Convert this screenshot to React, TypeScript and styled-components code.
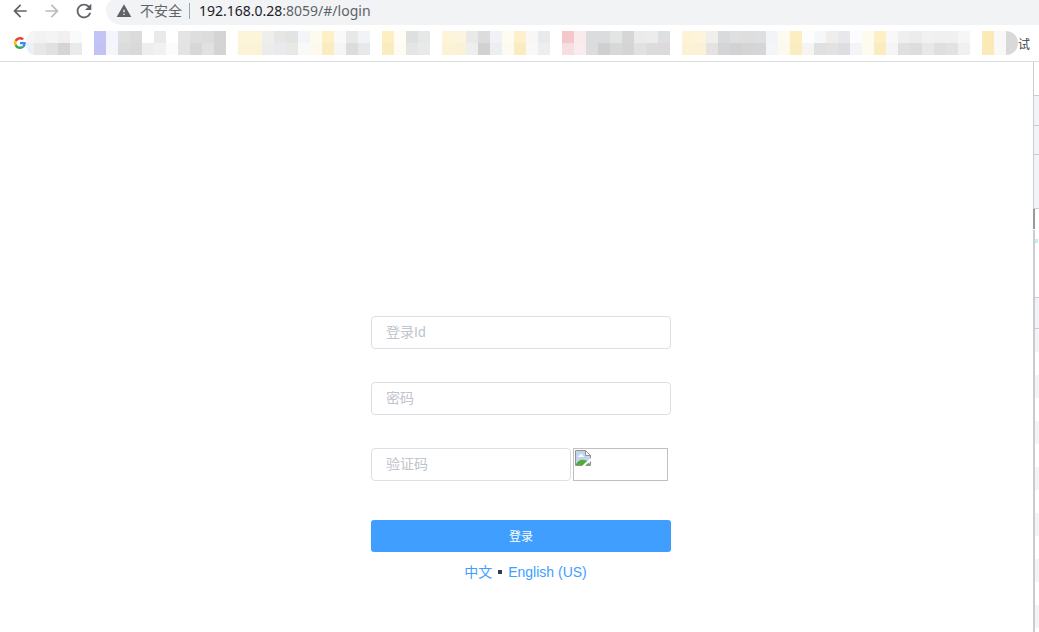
import React from 'react';
import styled, { createGlobalStyle } from 'styled-components';

const GlobalStyle = createGlobalStyle`
  * { box-sizing: border-box; }
  body {
    margin: 0;
    background: #fff;
    font-family: "Liberation Sans", "Noto Sans CJK SC", sans-serif;
    font-size: 14px;
  }
`;

const Page = styled.div`
  display: flex;
  flex-direction: column;
  height: 100vh;
  overflow: hidden;
`;

const Toolbar = styled.header`
  display: flex;
  height: 25px;
  padding-left: 4px;
`;

const IconButton = styled.button<{ $muted?: boolean }>`
  display: flex;
  align-items: center;
  justify-content: center;
  width: 32px;
  height: 22px;
  padding: 0;
  border: 0;
  background: none;
  color: ${(p) => (p.$muted ? '#babcbe' : '#5f6368')};
`;

const AddressBar = styled.div`
  display: flex;
  flex: 1;
  align-items: center;
  margin-left: 6px;
  padding: 0 0 3px 10px;
  border-radius: 6px 0 0 16px / 10px 0 0 15px;
  background: #f1f3f4;
  color: #5f6368;
  font-family: "Open Sans", "Noto Sans CJK SC", sans-serif;
  line-height: 20px;
`;

const Security = styled.span`
  display: flex;
  align-items: center;
  gap: 8px;
  padding-right: 7px;
`;

const Divider = styled.span`
  width: 1px;
  height: 16px;
  margin-right: 9px;
  background: #9fa2a6;
`;

const Url = styled.span`
  font-family: "Noto Sans", sans-serif;
  white-space: nowrap;
`;

const Host = styled.span`
  color: #202124;
`;

const Bookmarks = styled.nav`
  display: flex;
  align-items: center;
  height: 37px;
  padding-left: 14px;
  border-bottom: 1px solid #dadce0;
  color: #3c4043;
  font-size: 12px;
`;

const Mosaic = styled.div`
  display: grid;
  grid-auto-flow: column;
  grid-template-rows: 12px 12px;
  grid-template-columns: 8px;
  grid-auto-columns: 12px;
  border-radius: 8px 12px 12px 8px / 12px;
  overflow: hidden;
`;

const Tile = styled.span<{ $color: string }>`
  background: #${(p) => p.$color};
`;

const Body = styled.div`
  display: flex;
  flex: 1;
  min-height: 0;
`;

const Content = styled.main`
  display: flex;
  flex: 1;
  flex-direction: column;
  align-items: center;
  padding: 254px 0 0 9px;
`;

const Form = styled.form`
  display: flex;
  flex-direction: column;
  gap: 33px;
  width: 300px;
`;

const Input = styled.input`
  width: 100%;
  height: 33px;
  padding: 0 14px 2px;
  border: 1px solid #dcdfe6;
  border-radius: 4px;
  background: #fff;
  color: #606266;
  font: inherit;
  outline: none;

  &::placeholder {
    color: #c0c4cc;
    opacity: 1;
  }
`;

const CaptchaRow = styled.div`
  display: grid;
  grid-template-columns: 200px 95px;
  gap: 2px;
`;

const Captcha = styled.div`
  height: 33px;
  padding: 1px;
  border: 1px solid #c0c0c0;
`;

const Submit = styled.button`
  height: 32px;
  margin-top: 6px;
  padding: 0 0 2px;
  border: 0;
  border-radius: 3px;
  background: #409eff;
  color: #fff;
  font: inherit;
  font-size: 12px;
`;

const Languages = styled.div`
  display: flex;
  align-items: center;
  gap: 5px;
  margin-top: 10px;
  padding-left: 9px;
  line-height: 20px;
`;

const Language = styled.a`
  color: #409eff;
  text-decoration: none;
`;

const Dot = styled.span`
  width: 4px;
  height: 4px;
  margin: 0 1px;
  background: #2c3e50;
`;

const Edge = styled.aside`
  width: 6px;
  overflow: hidden;
`;

const Band = styled.div<{ $height: number; $fill: string; $line?: string; $thick?: boolean; $rule?: boolean }>`
  display: flex;
  align-items: flex-start;
  height: ${(p) => p.$height}px;
  border-left: ${(p) => (p.$thick ? 2 : 1)}px solid ${(p) => p.$line ?? '#c8cbd1'};
  border-bottom: ${(p) => (p.$rule ? '1px solid #c8cbd1' : '0')};
  background: ${(p) => p.$fill};
`;

const Marker = styled.div`
  width: 3px;
  height: 4px;
  margin-top: 9px;
  background: #c5eef0;
`;

// Each pair is one column of the strip: upper tile, lower tile.
const tiles = `
f5f5f5 e8f1fa f2f2f2 e8e7e5 f4f4f4 e1e1e1 f2eff0 d7d4d5 f9fbfa e9eaeb fff fff
c3c4f6 c3c2f4 f3f4fe f5f6fb dee0df dbdddd dbdbdb d9d9d9 fff eeeeee e9e9e9 f3f0f4
fff fbfbfb e4e4e4 e3e3e3 dedede d7d7d7 dcdcdd e2e1df d4d4d4 d4d4d4 fff fff
fdf5d8 fbf2d8 fdf4dc fbf3d6 eeeeec ececec e6e7e4 ebe9ee e2e4e3 e8e8e5 f4f5f9 f8faf9
fdfaee fdf9ee fdf0c6 fbecbf f9f9fa f6f5f4 e7e8e8 dcdcdc f1f3f7 e6e9e7 fff fff
fdefc2 fbecbf fffcf6 fefbf4 dde0df e4e6e6 e6e8e8 e9e9e9 fff fff
fdf4da fbf3d6 fcf5dd fbf2d6 e9e9e8 eeeeef dcdcdc d1d1cf f0f2f5 eceff1 fefcf2 fdfbf0
fef0ca fbecbf f8f7f5 f9f8f7 e8eaec eceeef fff fff
f4c8ca f6dfe1 faeaec faebed dadcde dadcde dadddd cfcfcf e3e4e4 d8d9d6 d6d6d7 d6d5d6
ebebec e1e1e2 ececed dddbdd dedfe2 dcdadb fff fff
fdf4d6 fbf2d6 fdf4dc fbf2d6 f0efec e4e3e2 d8dadc d3d5d7 dfdfdf d3d1d4 dedede d5d5d6
dedfe1 d5d6d8 f3f4f8 f3f5f8 fdfbef fcfaec fdeec2 fcecc2 fdfdfd f5f4f3 f6f7f8 dee1e0
efeeec e1e2e1 e8e8ec dfdde1 fcfcfd f3f4f8 fdfbee fdfbee fdefc6 fbecbf f8f8f8 f5f5f6
eeefee e0e0e0 ececec dcdddf f0f1f2 e8e8e7 f0f0f1 dedfe1 f0f0f0 e2e2e2 f5f6f7 f0f0f1
fff fff fce9b6 fbeab9 f8f8f6 f8f8f6 d9d9d9 d9d9d9
`.trim().split(/\s+/);

const stripes = [0, 1, 2, 3, 4, 5, 6, 7, 8, 9, 10, 11];

const Glyph = ({ d, size = 21 }: { d: string; size?: number }) => (
  <svg width={size} height={size} viewBox="0 0 24 24" fill="currentColor" aria-hidden="true">
    <path d={d} />
  </svg>
);

const GoogleLogo = () => (
  <svg width="12" height="12" viewBox="0 0 48 48" aria-hidden="true">
    <path fill="#EA4335" d="M24 9.5c3.54 0 6.71 1.22 9.21 3.6l6.85-6.85C35.9 2.38 30.47 0 24 0 14.62 0 6.51 5.38 2.56 13.22l7.98 6.19C12.43 13.72 17.74 9.5 24 9.5z" />
    <path fill="#4285F4" d="M46.98 24.55c0-1.57-.15-3.09-.38-4.55H24v9.02h12.94c-.58 2.96-2.26 5.48-4.78 7.18l7.73 6c4.51-4.18 7.09-10.36 7.09-17.65z" />
    <path fill="#FBBC05" d="M10.53 28.59A14.5 14.5 0 0 1 9.77 24c0-1.6.27-3.14.76-4.59l-7.98-6.19A23.9 23.9 0 0 0 0 24c0 3.88.92 7.54 2.56 10.78l7.97-6.19z" />
    <path fill="#34A853" d="M24 48c6.48 0 11.93-2.13 15.89-5.81l-7.73-6c-2.15 1.45-4.92 2.3-8.16 2.3-6.26 0-11.57-4.22-13.47-9.91l-7.98 6.19C6.51 42.62 14.62 48 24 48z" />
  </svg>
);

const BrokenImage = () => (
  <svg width="16" height="16" viewBox="0 0 16 16" role="img" aria-label="验证码图片">
    <path fill="#c3d4f1" d="M1 1h9l5 5v9H1z" />
    <path fill="#fff" d="M3 7c0-1 1-2 2-2 1-2 3-1 3 1 1 0 1 1 1 1z" />
    <path fill="#55ab3a" d="M1 15v-1c2-3 5-5 8-4 3 0 4 2 6 5z" />
    <path fill="none" stroke="#929292" d="M.500 15.500V.500h10l5 5v10z" />
    <path fill="#fff" stroke="#929292" d="M10.500.500v5h5z" />
    <path fill="#fff" d="M7 16l3-3 6-5v3l-4 3-2 2z" />
  </svg>
);

export default function App() {
  return (
    <Page>
      <GlobalStyle />
      <Toolbar>
        <IconButton aria-label="后退">
          <Glyph size={20} d="M20 11H7.830l5.590-5.590L12 4l-8 8 8 8 1.410-1.410L7.830 13H20v-2z" />
        </IconButton>
        <IconButton aria-label="前进" $muted>
          <Glyph size={20} d="M12 4l-1.410 1.410L16.170 11H4v2h12.170l-5.580 5.590L12 20l8-8z" />
        </IconButton>
        <IconButton aria-label="重新加载">
          <Glyph size={22} d="M17.650 6.350A7.958 7.958 0 0 0 12 4c-4.420 0-7.990 3.580-7.990 8s3.570 8 7.990 8c3.730 0 6.840-2.550 7.730-6h-2.080A5.990 5.990 0 0 1 12 18c-3.310 0-6-2.690-6-6s2.690-6 6-6c1.660 0 3.140.690 4.220 1.780L13 11h7V4l-2.350 2.350z" />
        </IconButton>
        <AddressBar>
          <Security>
            <Glyph size={16} d="M1 21h22L12 2 1 21zm12-3h-2v-2h2v2zm0-4h-2v-4h2v4z" />
            不安全
          </Security>
          <Divider />
          <Url>
            <Host>192.168.0.28</Host>:8059/#/login
          </Url>
        </AddressBar>
      </Toolbar>
      <Bookmarks>
        <GoogleLogo />
        <Mosaic>
          {tiles.map((color, i) => (
            <Tile key={i} $color={color} />
          ))}
        </Mosaic>
        试
      </Bookmarks>
      <Body>
        <Content>
          <Form onSubmit={(e) => e.preventDefault()}>
            <Input aria-label="登录Id" placeholder="登录Id" />
            <Input aria-label="密码" type="password" placeholder="密码" />
            <CaptchaRow>
              <Input aria-label="验证码" placeholder="验证码" />
              <Captcha>
                <BrokenImage />
              </Captcha>
            </CaptchaRow>
            <Submit type="submit">登录</Submit>
          </Form>
          <Languages>
            <Language href="#zh">中文</Language>
            <Dot />
            <Language href="#en">English (US)</Language>
          </Languages>
        </Content>
        <Edge>
          <Band $height={34} $fill="#fff" $rule />
          <Band $height={30} $fill="#f1f3f6" $rule />
          <Band $height={29} $fill="#f1f3f6" $rule />
          <Band $height={54} $fill="#f1f3f6" $rule />
          <Band $height={20} $fill="#fff" $line="#999" $thick />
          <Band $height={1} $fill="#fff" $line="#fff" $thick />
          <Band $height={68} $fill="#fff" $line="#c8cdd8" $thick $rule>
            <Marker />
          </Band>
          <Band $height={31} $fill="#f2f3f5" $thick $rule />
          <Band $height={23} $fill="#f4f4f5" $thick />
          {stripes.map((n) => (
            <React.Fragment key={n}>
              <Band $height={23} $fill="#fff" $thick />
              <Band $height={23} $fill="#f4f4f5" $thick />
            </React.Fragment>
          ))}
        </Edge>
      </Body>
    </Page>
  );
}
